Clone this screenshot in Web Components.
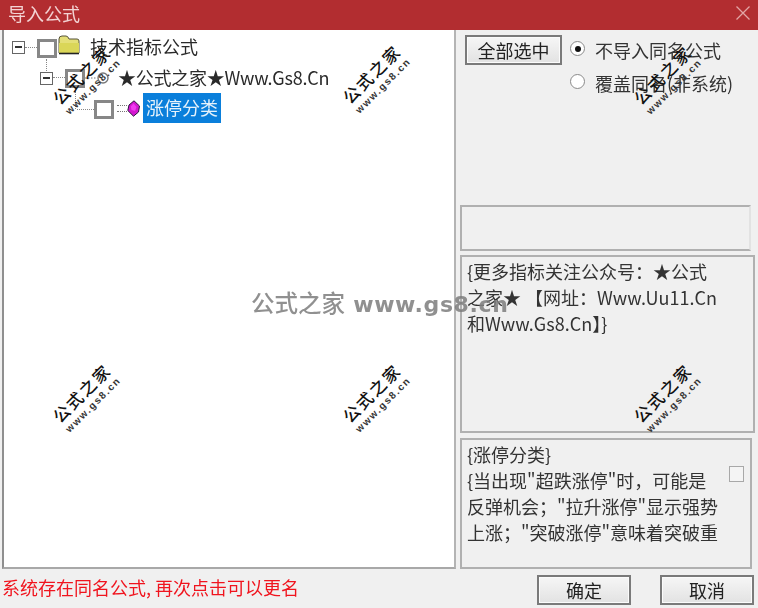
<!DOCTYPE html>
<html lang="zh-CN">
<head>
<meta charset="UTF-8" />
<title>导入公式</title>
<style>
  html, body { margin: 0; padding: 0; background: #f0f0f0; }
  body { font-family: "Noto Sans CJK SC", sans-serif; font-size: 18px; color: #222; width: 758px; height: 608px; overflow: hidden; }
  .opts { display: flex; align-items: flex-start; gap: 8px; padding-left: 5px; }
  .radios { margin-top: -2px; }
</style>
</head>
<body>
<import-dialog>
  <dialog-title slot="title">导入公式</dialog-title>
  <formula-tree slot="tree">
    <tree-row level="0" expander mark="folder">技术指标公式</tree-row>
    <tree-row level="1" expander mark="ring">★公式之家★Www.Gs8.Cn</tree-row>
    <tree-row level="2" mark="gem" selected>涨停分类</tree-row>
  </formula-tree>
  <div slot="options" class="opts">
    <push-button width="97" height="30">全部选中</push-button>
    <div class="radios">
      <radio-item checked>不导入同名公式</radio-item>
      <radio-item>覆盖同名(非系统)</radio-item>
    </div>
  </div>
  <memo-box slot="empty" style="height:46px;width:291px;border-right-color:#e2e2e2"></memo-box>
  <memo-box slot="info" style="height:178px">{更多指标关注公众号：★公式<br>之家★ 【网址：Www.Uu11.Cn<br>和Www.Gs8.Cn】}</memo-box>
  <memo-box slot="desc" style="height:131px;width:292px;margin-top:1px" check>{涨停分类}<br>{当出现"超跌涨停"时，可能是<br>反弹机会；"拉升涨停"显示强势<br>上涨；"突破涨停"意味着突破重</memo-box>
  <span slot="status">系统存在同名公式, 再次点击可以更名</span>
  <push-button slot="ok" width="94" height="30">确定</push-button>
  <push-button slot="cancel" width="94" height="30">取消</push-button>
</import-dialog>

<water-stamp style="left:86px;top:82px"></water-stamp>
<water-stamp style="left:376px;top:81px"></water-stamp>
<water-stamp style="left:667px;top:82px"></water-stamp>
<water-stamp style="left:86px;top:400px"></water-stamp>
<water-stamp style="left:376px;top:400px"></water-stamp>
<water-stamp style="left:667px;top:400px"></water-stamp>
<water-banner></water-banner>

<script>
  // small helper so each class stays short
  function shadow(el, html) {
    el.attachShadow({ mode: "open" }).innerHTML = html;
    return el.shadowRoot;
  }

  class ImportDialog extends HTMLElement {
    constructor() {
      super();
      shadow(this, `
        <style>
          :host { display: grid; width: 758px; height: 608px; box-sizing: border-box;
            grid-template-columns: 454px 295px; grid-template-rows: 30px 539px 39px;
            column-gap: 4px; padding-left: 2px; background: #f0f0f0; filter: blur(.35px); }
          .title { grid-column: 1 / 3; margin-left: -2px; width: 758px; }
          .right { display: flex; flex-direction: column; gap: 4px; padding-top: 5px; box-sizing: border-box; }
          .top { height: 166px; }
          .foot { grid-column: 1 / 3; display: flex; align-items: flex-start; gap: 29px; padding-right: 1px; height: 39px; }
          .status { flex: 1; color: #f0141e; font-size: 18px; line-height: 37px; }
          .foot ::slotted(push-button) { margin-top: 6px; }
        </style>
        <div class="title"><slot name="title"></slot></div>
        <slot name="tree"></slot>
        <div class="right">
          <div class="top"><slot name="options"></slot></div>
          <slot name="empty"></slot>
          <slot name="info"></slot>
          <slot name="desc"></slot>
        </div>
        <div class="foot">
          <div class="status"><slot name="status"></slot></div>
          <slot name="ok"></slot>
          <slot name="cancel"></slot>
        </div>`);
    }
  }

  class DialogTitle extends HTMLElement {
    constructor() {
      super();
      shadow(this, `
        <style>
          :host { display: flex; align-items: center; justify-content: space-between; height: 30px;
            box-sizing: border-box; padding: 0 8px 5px 8px; background: #b22d30; color: #f3d3d3; font-size: 18px; }
          svg { display: block; }
        </style>
        <slot></slot>
        <svg width="14" height="14" viewBox="0 0 14 14"><path d="M.5 .5 13.5 13.5M13.5 .5 .5 13.5" stroke="#e2a5a5" stroke-width="1.3" fill="none"/></svg>`);
    }
  }

  class FormulaTree extends HTMLElement {
    constructor() {
      super();
      shadow(this, `
        <style>
          :host { display: block; box-sizing: border-box; height: 539px; background: #fff; padding-top: 2px;
            border-left: 2px solid #8f8f8f; border-bottom: 2px solid #a8a8a8; border-right: 2px solid #b4b4b4; }
        </style>
        <slot></slot>`);
    }
  }

  class TreeRow extends HTMLElement {
    constructor() {
      super();
      const level = +this.getAttribute("level");
      const mark = this.getAttribute("mark");
      const expander = this.hasAttribute("expander");
      const icons = {
        folder: `<svg class="mark" style="margin:-4px 7px 0 1px" width="22" height="20" viewBox="0 0 22 20">
            <path d="M1 18V4q0-3 3-3h4q2 0 3 3h8q2 0 2 2v12z" fill="#e4df78" stroke="#55533a" stroke-width="1"/>
            <path d="M1 18V8h20v10z" fill="#dad658"/>
            <path d="M1 18.5h20" stroke="#222" stroke-width="1.6"/></svg>`,
        ring: `<svg class="mark" style="margin:0 5px 0 0" width="25" height="14" viewBox="0 0 25 14">
            <path d="M0 7h12" stroke="#777" stroke-dasharray="1.5 1.5"/>
            <circle cx="18" cy="7" r="5" fill="#fff" stroke="#777" stroke-width="1.4"/></svg>`,
        gem: `<svg class="mark" style="margin:0 3px 0 0" width="13" height="17" viewBox="0 0 13 17">
            <path d="M7 .8 12.5 6 11.5 12 6.5 16.2 .8 10.5 2 5z" fill="#d416d0" stroke="#2c1440" stroke-width="1"/>
            <path d="M6.5 3.5 9.5 7 8 11 4.5 10 3.8 6.5z" fill="#f03cf0"/></svg>`
      };
      shadow(this, `
        <style>
          :host { display: flex; align-items: center; position: relative; height: 30.5px; white-space: nowrap; color: #2a2a2a; }
          .exp { width: 13px; height: 13px; box-sizing: border-box; border: 1.5px solid #666; background: #fff; position: relative; flex: none; margin-top: 1px; }
          .exp::after { content: ""; position: absolute; left: 2px; right: 2px; top: 4px; height: 2px; background: #333; }
          .dash { width: 12px; border-top: 1px dotted #888; flex: none; }
          .box { width: 20px; height: 19px; box-sizing: border-box; border: 3px solid #878787; background: #fff; flex: none; margin-top: 2px; }
          .mark { flex: none; display: block; }
          .lines { width: 10px; height: 5px; margin: 1px 3px 0 3px; border-top: 1px dotted #777; border-bottom: 1px dotted #777; flex: none; }
          .label { padding: 0 3px; height: 30px; line-height: 28px; }
          /* tree connector going up to the parent row */
          .up { position: absolute; border-left: 1px dotted #888; }
          :host([selected]) .label { background: #0a7fdb; color: #e6f2fb; }
          :host([level="0"]) { padding-left: 8px; }
          :host([level="1"]) { padding-left: 36px; letter-spacing: -.25px; }
          :host([level="2"]) { padding-left: 73px; }
          :host([level="1"]) .up { left: 42px; top: -4px; height: 12px; }
          :host([level="2"]) .up { left: 71px; top: -2px; height: 18px; }
          :host([level="2"]) .dash { width: 17px; margin-top: 2px; }
          :host([level="2"]) .lines { margin-right: 0; }
        </style>
        ${level ? '<span class="up"></span>' : ""}
        ${expander ? '<span class="exp"></span>' : ""}
        <span class="dash"></span>
        <span class="box"></span>
        ${mark === "gem" ? '<span class="lines"></span>' : ""}
        ${mark ? icons[mark] : ""}
        <span class="label"><slot></slot></span>`);
    }
  }

  class PushButton extends HTMLElement {
    constructor() {
      super();
      const w = this.getAttribute("width"), h = this.getAttribute("height");
      shadow(this, `
        <style>
          :host { display: flex; align-items: center; justify-content: center; box-sizing: border-box;
            width: ${w}px; height: ${h}px; border: 2px solid #7a7a7a; background: linear-gradient(#f6f6f6, #e2e2e2);
            box-shadow: inset 0 0 0 1px #fbfbfb; font-size: 18px; color: #222; flex: none; }
        </style>
        <slot></slot>`);
    }
  }

  class RadioItem extends HTMLElement {
    constructor() {
      super();
      shadow(this, `
        <style>
          :host { display: flex; align-items: center; gap: 10px; height: 33px; font-size: 18px; color: #333; white-space: nowrap; }
          .dot { width: 15px; height: 15px; box-sizing: border-box; border-radius: 50%; border: 1.5px solid #8a8a8a; background: #fff;
            display: flex; align-items: center; justify-content: center; flex: none; margin-top: -2px; }
          :host([checked]) .dot::after { content: ""; width: 6px; height: 6px; border-radius: 50%; background: #111; }
        </style>
        <span class="dot"></span><slot></slot>`);
    }
  }

  class MemoBox extends HTMLElement {
    constructor() {
      super();
      const check = this.hasAttribute("check");
      shadow(this, `
        <style>
          :host { display: block; position: relative; box-sizing: border-box; border: 2px solid #b0b0b0; background: #f0f0f0;
            padding: 1px 0 0 5px; font-size: 18px; line-height: 26px; color: #333; white-space: nowrap; flex: none; }
          .chk { position: absolute; right: 6px; top: 26px; width: 15px; height: 16px; box-sizing: border-box; border: 1.5px solid #a8a8a8; background: #f4f4f4; }
        </style>
        <slot></slot>${check ? '<span class="chk"></span>' : ""}`);
    }
  }

  // rotated site stamp, lies over everything
  class WaterStamp extends HTMLElement {
    constructor() {
      super();
      shadow(this, `
        <style>
          :host { position: absolute; width: 0; height: 0; pointer-events: none; }
          .in { position: absolute; left: -60px; top: -19px; width: 120px; text-align: center; transform: rotate(-45deg); color: #111; }
          .big { font: 500 16.5px/20px "Noto Sans CJK SC", sans-serif; letter-spacing: 2px; }
          .small { font: 700 10px/13px "Liberation Sans", sans-serif; letter-spacing: 1.6px; color: #333; }
        </style>
        <div class="in"><div class="big">公式之家</div><div class="small">www.gs8.cn</div></div>`);
    }
  }

  class WaterBanner extends HTMLElement {
    constructor() {
      super();
      shadow(this, `
        <style>
          :host { position: absolute; left: 251px; top: 286px; white-space: nowrap; color: rgba(125,125,125,.85); pointer-events: none;
            font: 700 22px/32px "DejaVu Sans", "Noto Sans CJK SC", sans-serif; letter-spacing: .6px; filter: blur(.3px); }
          .cn { font: 500 23.5px/32px "Noto Sans CJK SC", sans-serif; letter-spacing: 0; }
        </style>
        <span class="cn">公式之家</span> www.gs8.cn`);
    }
  }

  customElements.define("import-dialog", ImportDialog);
  customElements.define("dialog-title", DialogTitle);
  customElements.define("formula-tree", FormulaTree);
  customElements.define("tree-row", TreeRow);
  customElements.define("push-button", PushButton);
  customElements.define("radio-item", RadioItem);
  customElements.define("memo-box", MemoBox);
  customElements.define("water-stamp", WaterStamp);
  customElements.define("water-banner", WaterBanner);
</script>
</body>
</html>
